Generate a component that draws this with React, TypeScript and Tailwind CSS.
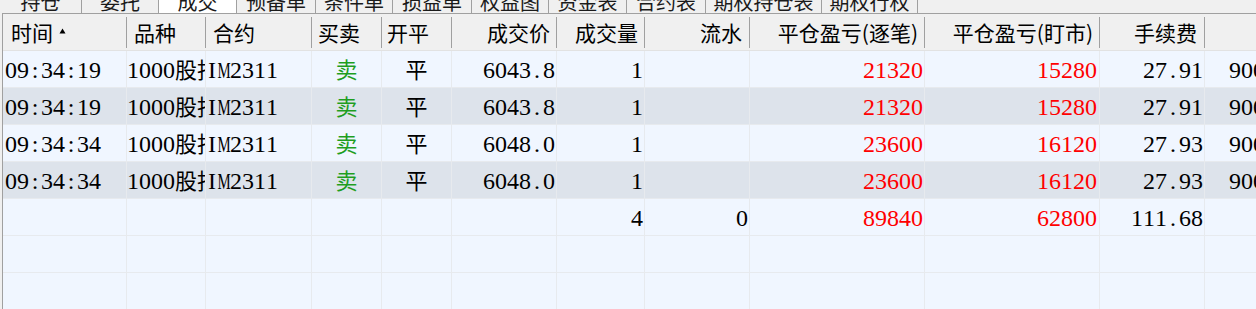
import React from 'react';

type Col = {
  w: string;
  title: string;
  head: string;
  cell: string;
};

const tabs = [
  { label: '持仓', w: 'w-[82px]' },
  { label: '委托', w: 'w-[77px]' },
  { label: '成交', w: 'w-[78px]', active: true },
  { label: '预备单', w: 'w-[79px]' },
  { label: '条件单', w: 'w-[77px]' },
  { label: '损益单', w: 'w-[79px]' },
  { label: '权益图', w: 'w-[77px]' },
  { label: '资金表', w: 'w-[78px]' },
  { label: '合约表', w: 'w-[79px]' },
  { label: '期权持仓表', w: 'w-[116px]' },
  { label: '期权行权', w: 'w-[96px]' },
];

const cols: Col[] = [
  { w: 'w-[124px]', title: '时间', head: 'justify-start pl-[8px]', cell: 'text-left pl-[2px]' },
  { w: 'w-[79px]', title: '品种', head: 'justify-start pl-[7px]', cell: 'text-left' },
  { w: 'w-[106px]', title: '合约', head: 'justify-start pl-[7px]', cell: 'text-left' },
  { w: 'w-[70px]', title: '买卖', head: 'justify-start pl-[6px]', cell: 'text-center' },
  { w: 'w-[70px]', title: '开平', head: 'justify-start pl-[5px]', cell: 'text-center' },
  { w: 'w-[105px]', title: '成交价', head: 'justify-end pr-[6px]', cell: 'text-right pr-[1px]' },
  { w: 'w-[88px]', title: '成交量', head: 'justify-end pr-[6px]', cell: 'text-right pr-[1px]' },
  { w: 'w-[105px]', title: '流水', head: 'justify-end pr-[7px]', cell: 'text-right pr-[1px]' },
  { w: 'w-[175px]', title: '平仓盈亏(逐笔)', head: 'justify-end pr-[6px]', cell: 'text-right pr-[1px] text-[#ff0000]' },
  { w: 'w-[175px]', title: '平仓盈亏(盯市)', head: 'justify-end pr-[6px]', cell: 'text-right pr-[2px] text-[#ff0000]' },
  { w: 'w-[105px]', title: '手续费', head: 'justify-end pr-[7px]', cell: 'text-right pr-[1px]' },
  { w: 'w-[300px]', title: '', head: 'justify-end pr-[6px]', cell: 'text-left pl-[24px]' },
];

const rows: string[][] = [
  ['09:34:19', '1000股指', 'IM2311', '卖', '平', '6043.8', '1', '', '21320', '15280', '27.91', '9000000'],
  ['09:34:19', '1000股指', 'IM2311', '卖', '平', '6043.8', '1', '', '21320', '15280', '27.91', '9000000'],
  ['09:34:34', '1000股指', 'IM2311', '卖', '平', '6048.0', '1', '', '23600', '16120', '27.93', '9000000'],
  ['09:34:34', '1000股指', 'IM2311', '卖', '平', '6048.0', '1', '', '23600', '16120', '27.93', '9000000'],
  ['', '', '', '', '', '', '4', '0', '89840', '62800', '111.68', ''],
  ['', '', '', '', '', '', '', '', '', '', '', ''],
  ['', '', '', '', '', '', '', '', '', '', '', ''],
];

// half-width cells like the old song-ti grid: every ascii char takes 12px
function Chars({ text }: { text: string }) {
  return (
    <>
      {Array.from(text).map((c, i) =>
        c.charCodeAt(0) < 128 ? (
          <span key={i} className={`inline-flex w-[12px] justify-center ${c === 'M' ? 'scale-x-[0.62]' : ''}`}>
            {c}
          </span>
        ) : (
          <span key={i} className="font-['Noto_Sans_CJK_SC',sans-serif] text-[22px] leading-none">
            {c}
          </span>
        )
      )}
    </>
  );
}

function SortArrow() {
  return (
    <svg width="7" height="6" viewBox="0 0 7 6" className="ml-[6px] mb-[4px] shrink-0">
      <path d="M3.5 0.5 L6.5 5.5 L0.5 5.5 Z" fill="#000" />
    </svg>
  );
}

export default function App() {
  return (
    <div className="w-[1256px] h-[309px] overflow-hidden bg-[#f0f0f0] font-['Noto_Sans_CJK_SC',sans-serif] text-black">
      {/* tab strip, cut at the top */}
      <div className="flex h-[13px]">
        {tabs.map((t) => (
          <div
            key={t.label}
            className={`${t.w} shrink-0 h-[13px] overflow-hidden flex justify-center border-r border-[#a0a0a0] ${t.active ? 'bg-white' : 'bg-[#f0f0f0]'}`}
          >
            <span className="text-[20px] leading-[20px] -mt-[8px] whitespace-nowrap text-[#1a1a1a]">{t.label}</span>
          </div>
        ))}
      </div>

      <div className="ml-[2px] border-l border-t border-[#a0a0a0]">
        {/* header */}
        <div className="flex h-[37px] items-center bg-[#f0f0f0] border-b border-[#e2e2e2]">
          {cols.map((c, i) => (
            <div
              key={i}
              className={`${c.w} shrink-0 h-[31px] flex items-center pt-[1px] text-[21px] whitespace-nowrap ${c.head} ${i < cols.length - 1 ? 'border-r border-[#a0a0a0]' : ''}`}
            >
              {c.title}
              {i === 0 && <SortArrow />}
            </div>
          ))}
        </div>

        {/* rows */}
        {rows.map((r, ri) => (
          <div
            key={ri}
            className={`flex h-[37px] border-b border-[#e7eaee] ${ri === 1 || ri === 3 ? 'bg-[#dde3eb]' : 'bg-[#f0f6ff]'}`}
          >
            {r.map((v, ci) => (
              <div
                key={ci}
                className={`${cols[ci].w} shrink-0 h-[36px] overflow-hidden whitespace-nowrap leading-[38px] text-[24px] font-['Liberation_Serif',serif] ${cols[ci].cell} ${ci === 3 ? 'text-[#1f9e1f]' : ''} ${ci < cols.length - 1 ? 'border-r border-[#e7eaee]' : ''}`}
              >
                <Chars text={v} />
              </div>
            ))}
          </div>
        ))}
      </div>
    </div>
  );
}
